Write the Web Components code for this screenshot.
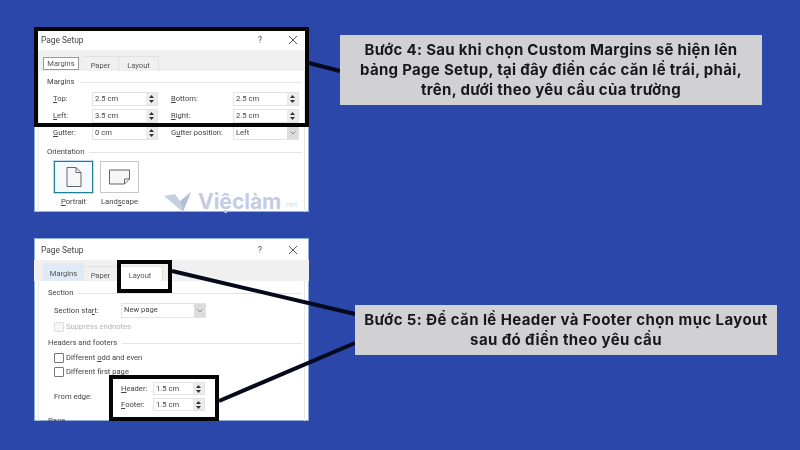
<!DOCTYPE html>
<html lang="vi">
<head>
<meta charset="utf-8">
<title>Page Setup</title>
<style>
  html, body { margin: 0; padding: 0; background: #2b47a9; }
</style>
</head>
<body>

<guide-stage>
  <guide-row>
    <page-setup active="Margins" focus="Margins" widths="36,36,40">
      <group-label>Margins</group-label>
      <field-grid>
        <form-label><u>T</u>op:</form-label><spin-field value="2.5 cm"></spin-field>
        <form-label><u>B</u>ottom:</form-label><spin-field value="2.5 cm"></spin-field>
        <form-label><u>L</u>eft:</form-label><spin-field value="3.5 cm"></spin-field>
        <form-label><u>R</u>ight:</form-label><spin-field value="2.5 cm"></spin-field>
        <form-label><u>G</u>utter:</form-label><spin-field value="0 cm"></spin-field>
        <form-label>G<u>u</u>tter position:</form-label><spin-field value="Left" kind="select"></spin-field>
      </field-grid>
      <group-label style="margin-top:6px">Orientation</group-label>
      <orient-picker></orient-picker>
      <water-mark slot="over"></water-mark>
      <black-frame slot="over" style="left:0;top:-2px;width:275px;height:100px"></black-frame>
    </page-setup>
    <call-out style="margin:6px 0 0 31px;height:70px;letter-spacing:.3px">
      <div>Bước 4: Sau khi chọn Custom Margins sẽ hiện lên</div>
      <div>bảng Page Setup, tại đây điền các căn lề trái, phải,</div>
      <div>trên, dưới theo yêu cầu của trường</div>
    </call-out>
  </guide-row>
  <guide-row>
    <page-setup active="Layout" tint="Margins" widths="41,34,45" style="--title-h:22px;--title-top:2px;--body-top:6px;--body-left:9px">
      <group-label>Section</group-label>
      <section-start></section-start>
      <check-row disabled style="margin-top:2px">Suppress endnotes</check-row>
      <group-label style="margin-top:3px">Headers and footers</group-label>
      <check-row style="margin-top:2px">Different <u>o</u>dd and even</check-row>
      <check-row>Different first <u>p</u>age</check-row>
      <edge-rows></edge-rows>
      <group-label style="margin-top:4px">Page</group-label>
      <black-frame slot="over" style="left:83px;top:22px;width:55px;height:33px"></black-frame>
      <black-frame slot="over" style="left:75px;top:137px;width:110px;height:46px"></black-frame>
    </page-setup>
    <call-out style="margin:67px 0 0 46px;height:50px;letter-spacing:.4px">
      <div>Bước 5: Để căn lề Header và Footer chọn mục Layout</div>
      <div>sau đó điền theo yêu cầu</div>
    </call-out>
  </guide-row>
</guide-stage>

<script>
const DIALOG_FONT = 'Roboto, "Noto Sans", sans-serif';

class GuideStage extends HTMLElement {
  constructor() {
    super();
    this.attachShadow({ mode: 'open' }).innerHTML = `
      <style>
        :host { display: flex; flex-direction: column; gap: 26px; position: relative; width: 800px; height: 450px;
                box-sizing: border-box; padding: 29px 0 0 34px; background: #2b47a9; overflow: hidden; }
        svg { position: absolute; left: 0; top: 0; pointer-events: none; filter: blur(.3px); }
      </style>
      <slot></slot>
      <svg width="800" height="450" viewBox="0 0 800 450" fill="none" stroke="#06091c" stroke-width="4">
        <line x1="309" y1="63" x2="340" y2="71"/>
        <line x1="172" y1="271" x2="355" y2="314"/>
        <line x1="219" y1="401" x2="355" y2="343"/>
      </svg>`;
  }
}

class GuideRow extends HTMLElement {
  constructor() {
    super();
    this.attachShadow({ mode: 'open' }).innerHTML = `
      <style>:host { display: flex; align-items: flex-start; }</style><slot></slot>`;
  }
}

class CallOut extends HTMLElement {
  constructor() {
    super();
    this.attachShadow({ mode: 'open' }).innerHTML = `
      <style>
        :host { display: flex; flex-direction: column; justify-content: center; width: 422px; box-sizing: border-box;
                background: #d1d1d4; color: #17171c; text-align: center; white-space: nowrap; position: relative; z-index: 1;
                font: 700 15px/20px Inter, "Open Sans", sans-serif; filter: blur(.25px); }
      </style><slot></slot>`;
  }
}

class PageSetup extends HTMLElement {
  connectedCallback() {
    const active = this.getAttribute('active');
    const focus = this.getAttribute('focus');
    const tint = this.getAttribute('tint');
    const widths = this.getAttribute('widths').split(',');
    const tabs = ['Margins', 'Paper', 'Layout'].map((name, i) => {
      const cls = [name === active ? 'on' : '', name === focus ? 'focus' : '', name === tint ? 'tint' : ''].join(' ');
      return `<span class="tab ${cls}" style="width:${widths[i]}px">${name}</span>`;
    }).join('');
    this.attachShadow({ mode: 'open' }).innerHTML = `
      <style>
        :host { display: block; position: relative; width: 275px; height: 183px; flex: none; }
        .win { height: 100%; overflow: hidden; background: #fff; color: #444; filter: blur(.4px);
               font: 7.6px/12px ${DIALOG_FONT}; box-shadow: inset 0 0 0 1px #8fb0dc; }
        .title { display: flex; align-items: center; box-sizing: border-box; height: var(--title-h, 21px);
                 padding: var(--title-top, 0) 11px 0 7px; font-size: 8.4px; }
        .title b { font-weight: 400; flex: 1; }
        .title svg { margin-left: 26px; }
        .strip { display: flex; align-items: flex-end; height: 21px; background: #f0f0f0; padding: 0 0 0 9px; }
        .tab { height: 15px; line-height: 17px; text-align: center; box-sizing: border-box; border: 1px solid #e2e2e2;
               border-bottom: 0; border-left: 0; color: #555; }
        .tab.on { background: #fff; }
        .tab.focus { height: 13px; line-height: 12px; margin-bottom: 1px; border: 1px solid #9a9a9a; background: #fff; margin-right: 4px; }
        .tab.tint { background: #dfeaf6; border: 0; height: 18px; line-height: 21px; }
        .body { padding: var(--body-top, 5px) 8px 0 var(--body-left, 8px); margin: 0 4px; border: solid #e8e8e8; border-width: 0 1px;
                height: 140px; }
      </style>
      <div class="win">
        <div class="title"><b>Page Setup</b>
          <span>?</span>
          <svg width="10" height="10" viewBox="0 0 10 10" stroke="#444" stroke-width=".9"><path d="M1 1l8 8M9 1l-8 8"/></svg>
        </div>
        <div class="strip">${tabs}</div>
        <div class="body"><slot></slot></div>
      </div>
      <slot name="over"></slot>`;
  }
}

class GroupLabel extends HTMLElement {
  constructor() {
    super();
    this.attachShadow({ mode: 'open' }).innerHTML = `
      <style>
        :host { display: flex; align-items: center; gap: 5px; height: 12px; margin-right: -6px; }
        i { flex: 1; height: 1px; background: #e4e4e4; }
      </style><slot></slot><i></i>`;
  }
}

class FieldGrid extends HTMLElement {
  constructor() {
    super();
    this.attachShadow({ mode: 'open' }).innerHTML = `
      <style>
        :host { display: grid; grid-template-columns: 39px 66px 75px 66px; column-gap: 0; row-gap: 3px;
                grid-auto-rows: 14px; align-items: center; padding: 4px 0 0 6px; }
        ::slotted(form-label:nth-of-type(2n)) { padding-left: 13px; }
      </style><slot></slot>`;
  }
}

class FormLabel extends HTMLElement {
  constructor() {
    super();
    this.attachShadow({ mode: 'open' }).innerHTML = `
      <style>:host { display: block; white-space: nowrap; }</style><slot></slot>`;
  }
}

class SpinField extends HTMLElement {
  connectedCallback() {
    const value = this.getAttribute('value');
    const isSelect = this.getAttribute('kind') === 'select';
    const tail = isSelect
      ? `<span class="drop"><svg width="6" height="4" viewBox="0 0 6 4" fill="none" stroke="#777" stroke-width=".8"><path d="M.5 .5L3 3l2.5-2.5"/></svg></span>`
      : `<span class="spin"><svg width="5" height="3" viewBox="0 0 5 3"><path d="M2.5 0L5 3H0z" fill="#333"/></svg><svg width="5" height="3" viewBox="0 0 5 3"><path d="M0 0h5L2.5 3z" fill="#333"/></svg></span>`;
    this.attachShadow({ mode: 'open' }).innerHTML = `
      <style>
        :host { display: flex; height: 100%; box-sizing: border-box; border: 1px solid #e3e3e3; background: #fff; }
        .val { flex: 1; padding-left: 2px; line-height: 12px; white-space: nowrap; overflow: hidden; }
        .spin, .drop { width: 11px; background: #ececec; display: flex; flex-direction: column; align-items: center; justify-content: center; gap: 2px; }
        .drop { background: #dcdcdc; }
      </style>
      <span class="val">${value}</span>${tail}`;
  }
}

class OrientPicker extends HTMLElement {
  constructor() {
    super();
    this.attachShadow({ mode: 'open' }).innerHTML = `
      <style>
        :host { display: flex; gap: 7px; padding: 3px 0 0 7px; }
        .item { width: 39px; display: flex; flex-direction: column; align-items: center; white-space: nowrap; }
        .box { width: 39px; height: 32px; box-sizing: border-box; border: 1px solid #c8c8c8; display: flex; align-items: center; justify-content: center; margin-bottom: 3px; }
        .box.sel { border: 1px solid #1f7f95; box-shadow: 0 0 0 1px #b9dcf0; background: #f3f9fd; }
      </style>
      <div class="item">
        <div class="box sel"><svg width="16" height="20" viewBox="0 0 16 20" fill="#f6f6f6" stroke="#555" stroke-width=".9"><path d="M1 .5h9l5 5v14H1zM10 .5v5h5"/></svg></div>
        <span><u>P</u>ortrait</span>
      </div>
      <div class="item">
        <div class="box"><svg width="21" height="16" viewBox="0 0 21 16" fill="#f6f6f6" stroke="#555" stroke-width=".9"><path d="M.5 1h20v9l-5 5H.5zM20.500 10h-5v5"/></svg></div>
        <span>Land<u>s</u>cape</span>
      </div>`;
  }
}

class SectionStart extends HTMLElement {
  constructor() {
    super();
    this.attachShadow({ mode: 'open' }).innerHTML = `
      <style>
        :host { display: flex; align-items: center; height: 15px; padding: 4px 0 0 6px; }
        span { width: 67px; white-space: nowrap; }
        spin-field { width: 85px; height: 15px; }
      </style>
      <span>Section sta<u>r</u>t:</span><spin-field value="New page" kind="select"></spin-field>`;
  }
}

class CheckRow extends HTMLElement {
  constructor() {
    super();
    this.attachShadow({ mode: 'open' }).innerHTML = `
      <style>
        :host { display: flex; align-items: center; gap: 2px; height: 14px; padding-left: 6px; white-space: nowrap; }
        :host([disabled]) { color: #b4b4b4; }
        i { flex: none; width: 10px; height: 10px; box-sizing: border-box; border: 1px solid #777; border-radius: 1px; background: #fff; }
        :host([disabled]) i { border-color: #ddd; background: #f6f6f6; }
      </style><i></i><span><slot></slot></span>`;
  }
}

class EdgeRows extends HTMLElement {
  constructor() {
    super();
    this.attachShadow({ mode: 'open' }).innerHTML = `
      <style>
        :host { display: grid; grid-template-columns: 67px 32px 52px; grid-auto-rows: 13px; row-gap: 3px; align-items: center; padding: 3px 0 0 6px; }
        .edge { grid-row: span 2; }
      </style>
      <span class="edge">From edge:</span>
      <span><u>H</u>eader:</span><spin-field value="1.5 cm"></spin-field>
      <span><u>F</u>ooter:</span><spin-field value="1.5 cm"></spin-field>`;
  }
}

class WaterMark extends HTMLElement {
  constructor() {
    super();
    this.attachShadow({ mode: 'open' }).innerHTML = `
      <style>
        :host { position: absolute; left: 129px; top: 163px; display: flex; align-items: center; height: 20px; color: #c3cce3; white-space: nowrap; }
        svg { margin-right: 6px; }
        b { font: 700 21px/20px Inter, "Open Sans", sans-serif; }
        small { font: 400 8px/10px "Open Sans", sans-serif; color: #d5dbea; align-self: flex-end; margin: 0 0 3px 2px; }
      </style>
      <svg width="29" height="20" viewBox="0 0 29 20"><path d="M1 4l11-2 5 7 3 11z" fill="#c7cedf"/><path d="M28 0L20 20 17 9z" fill="#b3bfda"/></svg>
      <b>Việclàm</b><small>.net</small>`;
  }
}

class BlackFrame extends HTMLElement {
  constructor() {
    super();
    this.attachShadow({ mode: 'open' }).innerHTML = `
      <style>:host { position: absolute; display: block; box-sizing: border-box; border: 4px solid #050505; filter: blur(.2px); }</style>`;
  }
}

customElements.define('guide-stage', GuideStage);
customElements.define('guide-row', GuideRow);
customElements.define('call-out', CallOut);
customElements.define('page-setup', PageSetup);
customElements.define('group-label', GroupLabel);
customElements.define('field-grid', FieldGrid);
customElements.define('form-label', FormLabel);
customElements.define('spin-field', SpinField);
customElements.define('orient-picker', OrientPicker);
customElements.define('section-start', SectionStart);
customElements.define('check-row', CheckRow);
customElements.define('edge-rows', EdgeRows);
customElements.define('water-mark', WaterMark);
customElements.define('black-frame', BlackFrame);
</script>
</body>
</html>
